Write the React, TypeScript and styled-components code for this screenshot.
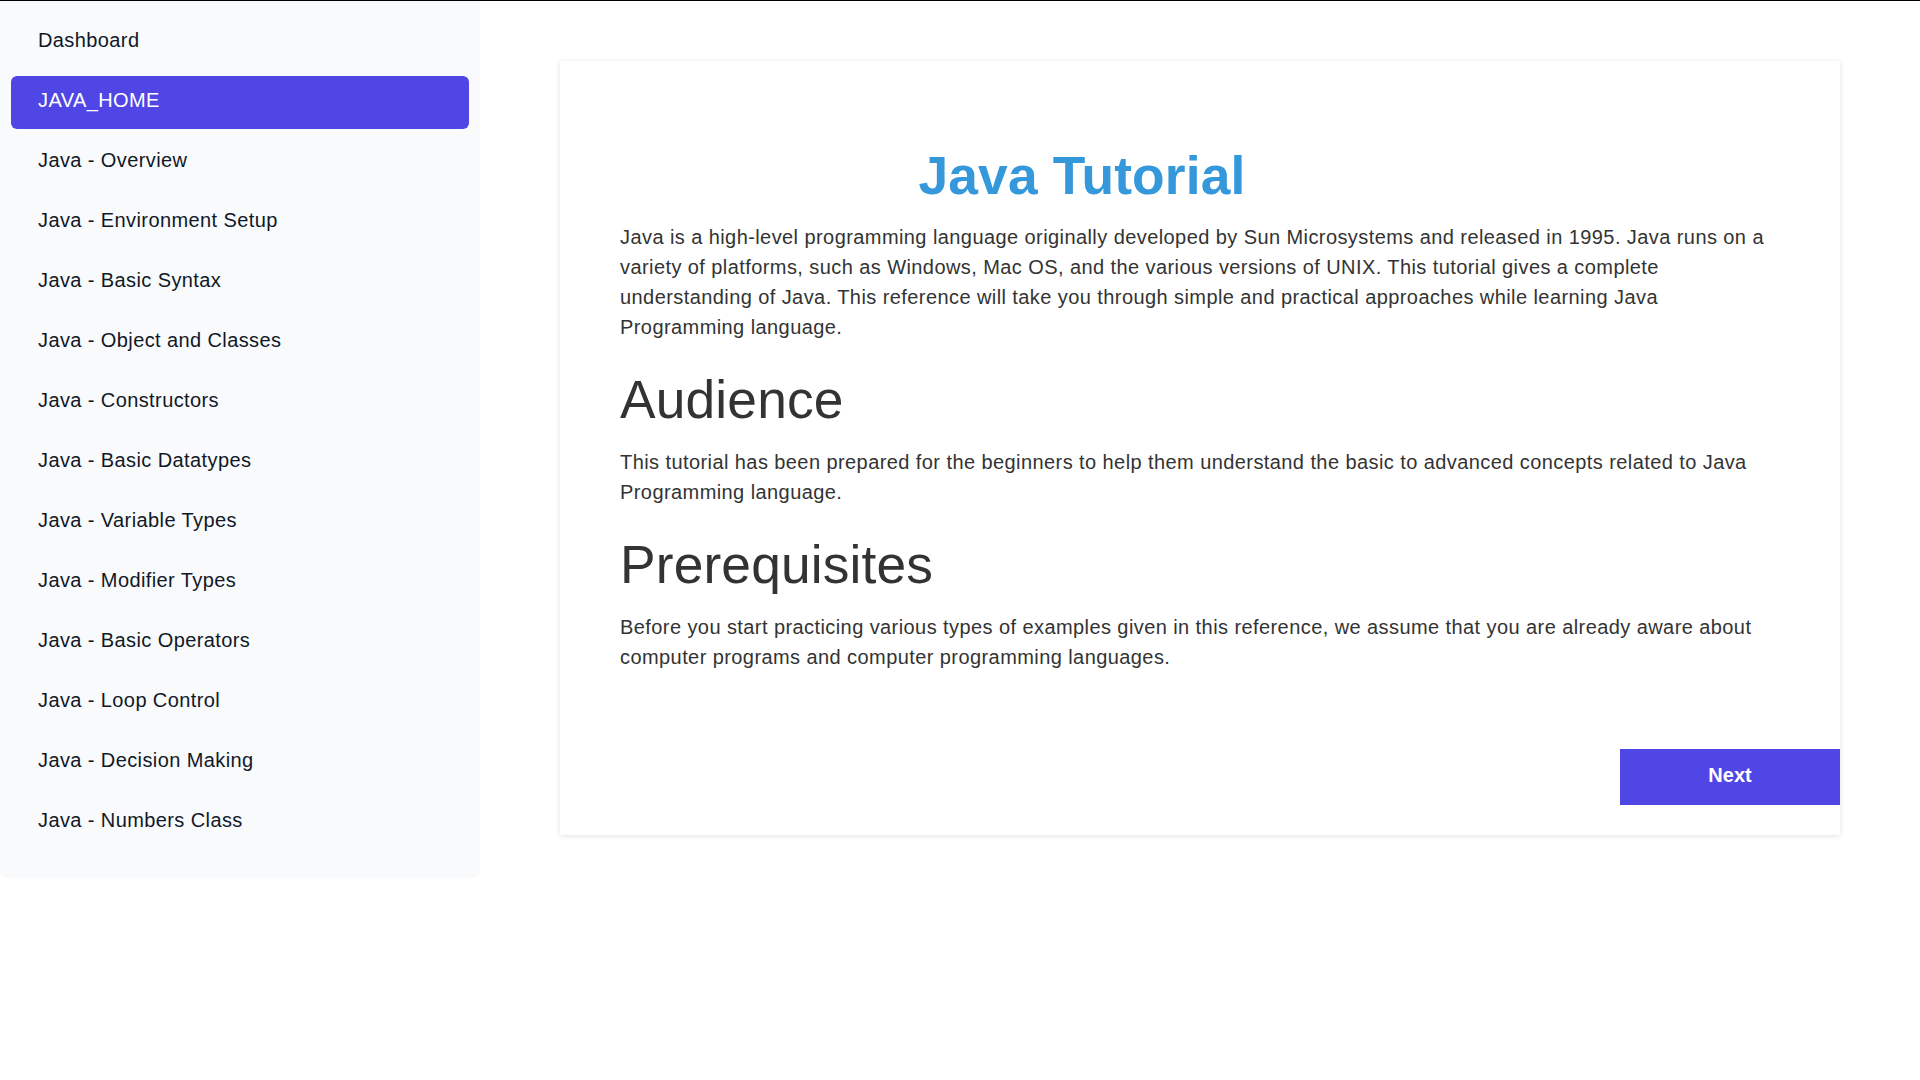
import React from "react";
import styled, { createGlobalStyle } from "styled-components";

const GlobalStyle = createGlobalStyle`
  html, body {
    margin: 0;
    padding: 0;
    background: #ffffff;
  }
  body {
    font-family: "Liberation Sans", Arial, Helvetica, sans-serif;
  }
  * { box-sizing: border-box; }
`;

const Page = styled.div`
  display: flex;
  align-items: flex-start;
  border-top: 1px solid #000000;
  min-height: 1080px;
`;

const Sidebar = styled.nav`
  width: 480px;
  flex-shrink: 0;
  background: #f8fafc;
  border-radius: 0 0 6px 6px;
  padding: 15px 0 22px;
  display: flex;
  flex-direction: column;
`;

const NavItem = styled.a<{ $active?: boolean }>`
  display: block;
  height: 53px;
  margin: 0 11px 7px;
  padding: 12px 27px 17px;
  border-radius: 6px;
  font-size: 20px;
  line-height: 24px;
  letter-spacing: 0.4px;
  text-decoration: none;
  cursor: pointer;
  color: ${(p) => (p.$active ? "#ffffff" : "#111827")};
  background: ${(p) => (p.$active ? "#5046e5" : "transparent")};
`;

const Main = styled.main`
  flex: 1;
  padding: 60px 80px;
`;

const Card = styled.article`
  background: #ffffff;
  box-shadow: 0 1px 5px rgba(0, 0, 0, 0.12);
  border-radius: 2px;
  padding-top: 84px;
  display: flex;
  flex-direction: column;
`;

const Content = styled.div`
  padding: 0 60px;
  color: #333333;
`;

const Title = styled.h1`
  margin: 0 0 16px;
  padding-right: 236px;
  text-align: center;
  font-size: 53.33px;
  line-height: 61px;
  font-weight: 700;
  letter-spacing: 0.15px;
  color: #3498db;
`;

const Heading = styled.h2`
  margin: 27px 0 17px;
  font-size: 53.33px;
  line-height: 61px;
  font-weight: 400;
  letter-spacing: 0.15px;
  color: #333333;
`;

const Paragraph = styled.p`
  margin: 0;
  font-size: 20px;
  line-height: 30px;
  letter-spacing: 0.42px;
  color: #333333;
`;

const Footer = styled.div`
  display: flex;
  justify-content: flex-end;
  margin-top: 77px;
  padding-bottom: 30px;
`;

const NextButton = styled.button`
  width: 220px;
  height: 56px;
  border: none;
  background: #5046e5;
  color: #ffffff;
  font-family: "Liberation Sans", Arial, Helvetica, sans-serif;
  font-size: 20px;
  font-weight: 700;
  cursor: pointer;
  padding: 0 0 4px;
`;

const items = [
  "Dashboard",
  "JAVA_HOME",
  "Java - Overview",
  "Java - Environment Setup",
  "Java - Basic Syntax",
  "Java - Object and Classes",
  "Java - Constructors",
  "Java - Basic Datatypes",
  "Java - Variable Types",
  "Java - Modifier Types",
  "Java - Basic Operators",
  "Java - Loop Control",
  "Java - Decision Making",
  "Java - Numbers Class",
];

export default function App() {
  return (
    <>
      <GlobalStyle />
      <Page>
        <Sidebar>
          {items.map((label) => (
            <NavItem key={label} $active={label === "JAVA_HOME"}>
              {label}
            </NavItem>
          ))}
        </Sidebar>
        <Main>
          <Card>
            <Content>
              <Title>Java Tutorial</Title>
              <Paragraph>
                Java is a high-level programming language originally developed by Sun
                Microsystems and released in 1995. Java runs on a variety of platforms,
                such as Windows, Mac OS, and the various versions of UNIX. This tutorial
                gives a complete understanding of Java. This reference will take you
                through simple and practical approaches while learning Java Programming
                language.
              </Paragraph>
              <Heading>Audience</Heading>
              <Paragraph>
                This tutorial has been prepared for the beginners to help them understand
                the basic to advanced concepts related to Java Programming language.
              </Paragraph>
              <Heading>Prerequisites</Heading>
              <Paragraph>
                Before you start practicing various types of examples given in this
                reference, we assume that you are already aware about computer programs
                and computer programming languages.
              </Paragraph>
            </Content>
            <Footer>
              <NextButton>Next</NextButton>
            </Footer>
          </Card>
        </Main>
      </Page>
    </>
  );
}
